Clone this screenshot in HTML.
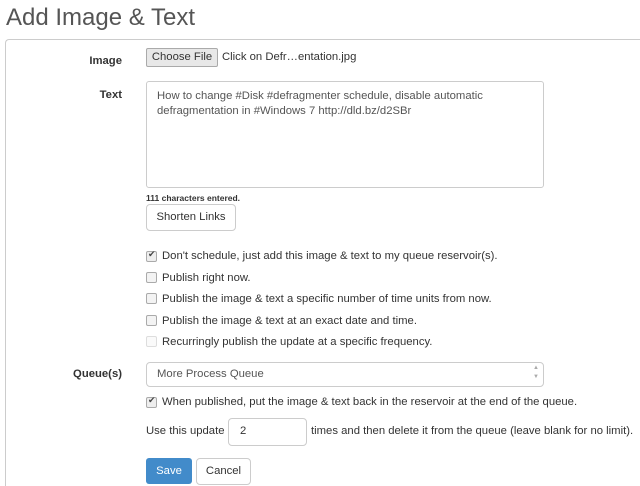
<!DOCTYPE html>
<html style="overflow:hidden;width:640px;height:486px"><head><style>
body{margin:0;width:640px;height:486px;overflow:hidden;background:#fff;font-family:"Liberation Sans",Arial,sans-serif;color:#333;font-size:11.3px;position:relative}
.a{position:absolute;white-space:nowrap}
h1{position:absolute;left:6px;top:4px;margin:0;font-weight:normal;font-size:24px;color:#555}
.panel{position:absolute;left:5px;top:39px;width:640px;height:446px;border-left:1px solid #ccc;border-top:1px solid #ccc;border-top-left-radius:4px}
.lbl{position:absolute;width:122px;text-align:right;font-weight:bold;font-size:11.3px;color:#333}
.box{position:absolute;border:1px solid #ccc;border-radius:4px;background:#fff}
.cb{position:absolute;left:146px;width:9px;height:9px;border:1px solid #aaa;border-radius:2px;background:#f3f3f3}
.ct{position:absolute;left:162px;white-space:nowrap;color:#333}
</style></head><body>
<h1>Add Image &amp; Text</h1>
<div class="panel"></div>
<div class="lbl" style="top:55px">Image</div>
<div class="a" style="left:146px;top:48px;width:70px;height:17px;border:1px solid #aaa;border-radius:2px;background:#e8e8e8;text-align:center;line-height:17px">Choose File</div>
<div class="a" style="left:222px;top:51px">Click on Defr…entation.jpg</div>
<div class="lbl" style="top:89px">Text</div>
<div class="box" style="left:146px;top:81px;width:396px;height:105px;border-radius:3px"></div>
<div class="a" style="left:157px;top:89px;color:#555;line-height:15px">How to change #Disk #defragmenter schedule, disable automatic<br>defragmentation in #Windows 7 http://dld.bz/d2SBr</div>
<div class="a" style="left:146px;top:193px;font-size:8.5px;font-weight:bold">111 characters entered.</div>
<div class="box" style="left:146px;top:204px;width:88px;height:25px;line-height:25px;text-align:center">Shorten Links</div>
<div class="cb" style="top:251px;background:#eee"><span style="position:absolute;left:1px;top:-3px;font-size:9px;color:#444">✔</span></div><div class="ct" style="top:250px">Don't schedule, just add this image &amp; text to my queue reservoir(s).</div>
<div class="cb" style="top:272px"></div><div class="ct" style="top:272px">Publish right now.</div>
<div class="cb" style="top:293px"></div><div class="ct" style="top:293px">Publish the image &amp; text a specific number of time units from now.</div>
<div class="cb" style="top:315px"></div><div class="ct" style="top:315px">Publish the image &amp; text at an exact date and time.</div>
<div class="cb" style="top:336px;border-color:#ddd;background:#fafafa"></div><div class="ct" style="top:336px">Recurringly publish the update at a specific frequency.</div>
<div class="lbl" style="top:368px">Queue(s)</div>
<div class="box" style="left:146px;top:362px;width:396px;height:23px"></div>
<div class="a" style="left:157px;top:368px;color:#555">More Process Queue</div>
<div class="a" style="left:533px;top:364px;font-size:6px;color:#aaa;line-height:9px">▲<br>▼</div>
<div class="cb" style="top:397px;background:#eee"><span style="position:absolute;left:1px;top:-3px;font-size:9px;color:#444">✔</span></div><div class="ct" style="top:396px">When published, put the image &amp; text back in the reservoir at the end of the queue.</div>
<div class="a" style="left:146px;top:425px">Use this update</div>
<div class="box" style="left:228px;top:418px;width:77px;height:26px"></div>
<div class="a" style="left:240px;top:425px">2</div>
<div class="a" style="left:311px;top:425px">times and then delete it from the queue (leave blank for no limit).</div>
<div class="a" style="left:146px;top:458px;width:46px;height:26px;background:#428bca;border-radius:3px;color:#fff;text-align:center;line-height:26px">Save</div>
<div class="box" style="left:196px;top:458px;width:53px;height:25px;line-height:25px;text-align:center">Cancel</div>
</body></html>
